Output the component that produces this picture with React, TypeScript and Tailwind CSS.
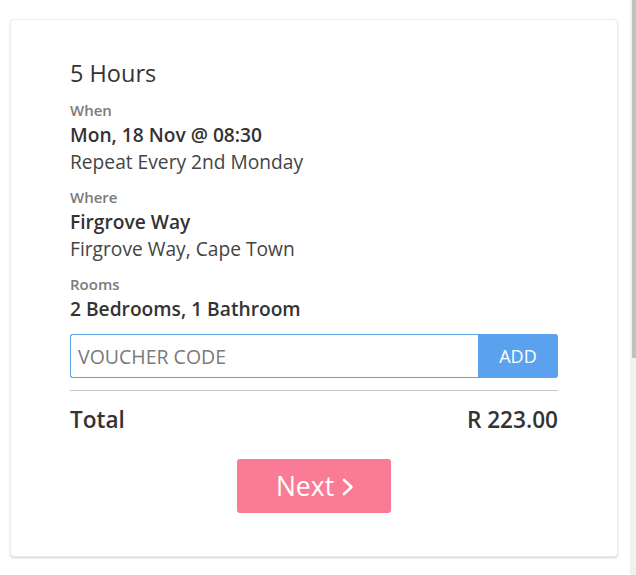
import React from "react";

export default function App() {
  const font = { fontFamily: '"Open Sans", "Noto Sans", sans-serif' };
  return (
    <div className="flex w-[636px] h-[575px] bg-white overflow-hidden" style={font}>
      <div className="w-[630px] h-full pl-[10px] pt-[19px]">
        <div className="w-[608px] h-[538px] bg-white rounded-[4px] border border-[#ececec] shadow-[0_1px_2px_rgba(0,0,0,0.18)] px-[59px] pt-[37px] text-[#333]">
          <div className="text-[23.5px] leading-[32px] text-[#333]">5 Hours</div>

          <div className="mt-[11px] text-[15px] leading-[20px] font-semibold text-[#7b7b7b]">When</div>
          <div className="mt-[1px] text-[19.2px] leading-[27px] font-semibold text-[#333]">Mon, 18 Nov @ 08:30</div>
          <div className="text-[19.2px] leading-[27px] text-[#444]">Repeat Every 2nd Monday</div>

          <div className="mt-[12px] text-[15px] leading-[20px] font-semibold text-[#7b7b7b]">Where</div>
          <div className="mt-[1px] text-[19.2px] leading-[27px] font-semibold text-[#333]">Firgrove Way</div>
          <div className="text-[19.2px] leading-[27px] text-[#444]">Firgrove Way, Cape Town</div>

          <div className="mt-[12px] text-[15px] leading-[20px] font-semibold text-[#7b7b7b]">Rooms</div>
          <div className="mt-[1px] text-[19.2px] leading-[27px] font-semibold text-[#333]">2 Bedrooms, 1 Bathroom</div>

          <div className="mt-[12px] flex h-[44px]">
            <input
              placeholder="VOUCHER CODE"
              className="flex-1 min-w-0 h-full border border-[#5a9fe8] border-r-0 rounded-l-[3px] px-[7px] text-[19.5px] text-[#333] placeholder:text-[#7a7a7a] outline-none"
              style={font}
            />
            <button className="w-[80px] h-full bg-[#5ba2ee] rounded-r-[3px] text-white text-[18px] flex items-center justify-center">
              ADD
            </button>
          </div>

          <div className="mt-[12px] h-px bg-[#c8c8c8]" />

          <div className="mt-[14px] flex justify-between text-[22.6px] leading-[30px] font-semibold text-[#333]">
            <span>Total</span>
            <span>R 223.00</span>
          </div>

          <div className="mt-[24px] flex justify-center">
            <button className="w-[154px] h-[54px] bg-[#f97b95] rounded-[3px] text-white text-[26.5px] flex items-center justify-center gap-[8px] pl-[2px] pt-[1px]">
              <span>Next</span>
              <svg width="12" height="18" viewBox="0 0 12 18" fill="none">
                <polyline points="2,2 9.5,9 2,16" stroke="white" strokeWidth="2.6" strokeLinecap="round" strokeLinejoin="round" />
              </svg>
            </button>
          </div>
        </div>
      </div>
      <div className="w-[6px] h-full bg-[#f1f1f1] flex justify-end">
        <div className="w-[4px] h-[358px] bg-[#c1c1c1]" />
      </div>
    </div>
  );
}
